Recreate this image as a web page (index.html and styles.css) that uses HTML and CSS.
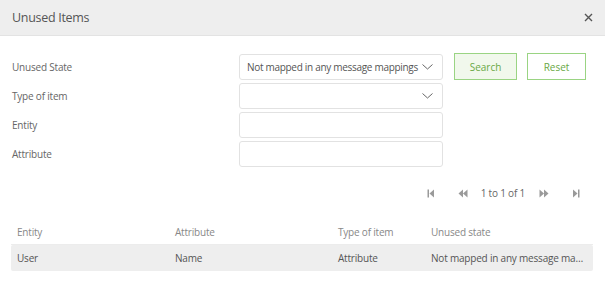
FILE: index.html
```html
<!DOCTYPE html>
<html>
<head>
<meta charset="utf-8">
<link rel="stylesheet" href="styles.css">
</head>
<body>
<div class="dialog">
  <div class="header">
    <span class="title">Unused Items</span>
    <svg class="close" width="9" height="9" viewBox="0 0 9 9"><path d="M1 1L8 8M8 1L1 8" stroke="#555" stroke-width="1.4" fill="none"/></svg>
  </div>
  <div class="form">
    <label class="label">Unused State</label>
    <div class="field select"><span class="value">Not mapped in any message mappings</span><svg class="chev" width="11" height="6" viewBox="0 0 11 6"><path d="M0.5 0.5L5.5 5L10.5 0.5" stroke="#666" stroke-width="1" fill="none"/></svg></div>
    <div class="buttons"><button class="btn search">Search</button><button class="btn reset">Reset</button></div>
    <label class="label">Type of item</label>
    <div class="field select"><span class="value"></span><svg class="chev" width="11" height="6" viewBox="0 0 11 6"><path d="M0.5 0.5L5.5 5L10.5 0.5" stroke="#666" stroke-width="1" fill="none"/></svg></div>
    <div></div>
    <label class="label">Entity</label>
    <div class="field"></div>
    <div></div>
    <label class="label">Attribute</label>
    <div class="field"></div>
    <div></div>
  </div>
  <div class="pager">
    <svg class="pi first" width="8" height="9" viewBox="0 0 8 9"><rect x="0.5" y="0.5" width="1.5" height="8" fill="#9a9a9a"/><path d="M7 0.5L2.5 4.5L7 8.5Z" fill="#9a9a9a"/></svg>
    <svg class="pi prev" width="10" height="9" viewBox="0 0 10 9"><path d="M5 0.5L0.5 4.5L5 8.5Z M9.5 0.5L5 4.5L9.5 8.5Z" fill="#9a9a9a"/></svg>
    <span class="ptext">1 to 1 of 1</span>
    <svg class="pi next" width="10" height="9" viewBox="0 0 10 9"><path d="M0.5 0.5L5 4.5L0.5 8.5Z M5 0.5L9.5 4.5L5 8.5Z" fill="#9a9a9a"/></svg>
    <svg class="pi last" width="8" height="9" viewBox="0 0 8 9"><path d="M1 0.5L5.5 4.5L1 8.5Z" fill="#9a9a9a"/><rect x="6" y="0.5" width="1.5" height="8" fill="#9a9a9a"/></svg>
  </div>
  <div class="table">
    <div class="tr thead">
      <div class="c c1">Entity</div><div class="c c2">Attribute</div><div class="c c3">Type of item</div><div class="c c4">Unused state</div>
    </div>
    <div class="tr row">
      <div class="c c1">User</div><div class="c c2">Name</div><div class="c c3">Attribute</div><div class="c c4">Not mapped in any message mappings</div>
    </div>
  </div>
</div>
</body>
</html>
```
FILE: styles.css
```css
* { box-sizing: border-box; }
html, body { margin: 0; padding: 0; background: #fff; }
body { font-family: "Open Sans", "Noto Sans", sans-serif; color: #555; }
.dialog { width: 605px; height: 281px; overflow: hidden; }
.header {
  height: 36px;
  background: #eeeeee;
  border-bottom: 1px solid #e3e3e3;
  display: flex;
  align-items: center;
  justify-content: space-between;
  padding: 0 12px 0 12px;
}
.title { font-size: 12.5px; color: #555; letter-spacing: -0.3px; }
.form {
  display: grid;
  grid-template-columns: 227px 204px auto;
  row-gap: 3px;
  padding: 17px 0 0 12px;
  align-items: center;
}
.label { font-size: 10px; color: #666; letter-spacing: -0.2px; }
.field {
  height: 26px;
  border: 1px solid #e2e2e2;
  border-radius: 3px;
  background: #fff;
}
.select { display: flex; align-items: center; justify-content: space-between; padding: 0 9px 0 7px; }
.value { font-size: 10px; color: #555; letter-spacing: -0.3px; white-space: nowrap; }
.chev { flex-shrink: 0; }
.buttons { display: flex; gap: 10px; padding-left: 11px; align-self: start; }
.btn {
  height: 27px;
  font-family: inherit;
  font-size: 10px;
  color: #6aa845;
  border: 1.5px solid #9ad483;
  background: #fff;
  padding: 0;
  border-radius: 0;
}
.search { width: 63px; background: #f1f8ec; }
.reset { width: 59px; }
.pager {
  display: flex;
  align-items: center;
  justify-content: flex-end;
  height: 20px;
  margin-top: 16px;
  padding-right: 25px;
}
.pi { display: block; }
.first { margin-right: 23px; }
.prev { margin-right: 13px; }
.ptext { font-size: 10px; color: #666; margin-right: 14px; letter-spacing: -0.2px; }
.next { margin-right: 23px; }
.table { margin: 16px 12px 0 11px; font-size: 10px; letter-spacing: -0.2px; }
.tr { display: flex; align-items: center; height: 26px; }
.thead { color: #888; border-bottom: 1px solid #ececec; }
.row { background: #eeeeee; border-radius: 2px; color: #555; }
.c { padding-left: 6px; white-space: nowrap; overflow: hidden; text-overflow: ellipsis; }
.c1 { width: 158px; }
.c2 { width: 163px; }
.c3 { width: 93px; }
.c4 { width: 168px; padding-right: 6px; }
```
